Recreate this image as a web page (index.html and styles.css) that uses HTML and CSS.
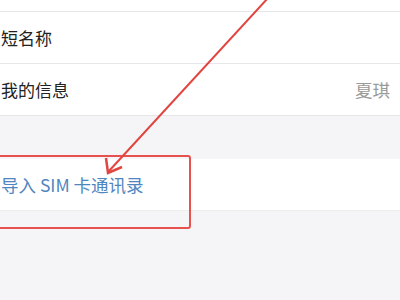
FILE: index.html
```html
<!DOCTYPE html>
<html>
<head>
<meta charset="utf-8">
<link rel="stylesheet" href="styles.css">
</head>
<body>
<div class="page">
  <div class="group">
    <div class="row top"></div>
    <div class="row"><span class="label">短名称</span></div>
    <div class="row last"><span class="label">我的信息</span><span class="value">夏琪</span></div>
  </div>
  <div class="gap"></div>
  <div class="group sim">
    <div class="row last"><span class="link">导入 SIM 卡通讯录</span></div>
  </div>
  <div class="highlight"></div>
  <svg class="arrow" width="400" height="300" viewBox="0 0 400 300">
    <line x1="268" y1="-2" x2="109" y2="171" stroke="#e2443f" stroke-width="2"/>
    <polyline points="106,158 108,173 122,167" fill="none" stroke="#e2443f" stroke-width="2.5" stroke-linejoin="miter"/>
  </svg>
</div>
</body>
</html>
```
FILE: styles.css
```css
html, body {
  margin: 0;
  padding: 0;
}
body {
  width: 400px;
  height: 300px;
  overflow: hidden;
  background: #f5f5f8;
  font-family: "Noto Sans CJK SC", "Noto Sans", sans-serif;
}
.page {
  position: relative;
  width: 400px;
  height: 300px;
}
.group {
  background: #fff;
}
.row {
  height: 52px;
  border-bottom: 1px solid #e8e8ea;
  display: flex;
  align-items: center;
  justify-content: space-between;
  padding: 0 10px 0 1px;
  box-sizing: border-box;
}
.row.top {
  height: 12px;
}
.row.last {
  border-bottom: 1px solid #e6e6e8;
}
.label {
  font-size: 17px;
  color: #222;
}
.value {
  font-size: 17.5px;
  color: #9a9a9a;
}
.gap {
  height: 43px;
}
.sim .row {
  height: 52px;
  border-bottom-color: #eeeeee;
}
.link {
  font-size: 17.5px;
  color: #4f86c0;
}
.highlight {
  position: absolute;
  left: -6px;
  top: 155px;
  width: 193px;
  height: 70px;
  border: 2px solid #e8524e;
  border-radius: 3px;
}
.arrow {
  position: absolute;
  left: 0;
  top: 0;
}
```
